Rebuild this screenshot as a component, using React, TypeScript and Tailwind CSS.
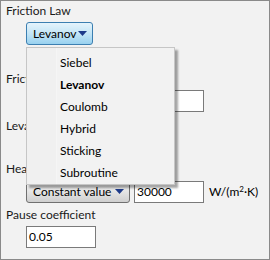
import React from "react";

// Windows-style property panel with the friction law dropdown opened

const laws = ["Siebel", "Levanov", "Coulomb", "Hybrid", "Sticking", "Subroutine"];

function Arrow() {
  return (
    <svg width="9" height="5" viewBox="0 0 9 5" className="shrink-0">
      <path d="M0 0 H9 L4.5 5 Z" fill="#1d3a8a" />
    </svg>
  );
}

function TextBox({ value, w = "w-[70px]" }: { value?: string; w?: string }) {
  return (
    <div className={`${w} h-[22px] border border-[#7a7a7a] bg-white px-[2px] flex items-center text-black`}>
      {value}
    </div>
  );
}

function Label({ text, className = "" }: { text: string; className?: string }) {
  return <div className={`h-[16px] leading-[16px] whitespace-nowrap ${className}`}>{text}</div>;
}

export default function App() {
  return (
    <div
      className="relative w-[270px] h-[260px] bg-[#f2f2f2] border border-[#8a8a8a] text-[12px] text-[#1a1a1a] overflow-hidden"
      style={{ fontFamily: 'Lato, "Open Sans", sans-serif' }}
    >
      <div className="flex flex-col pl-[5px] pt-[2px]">
        <Label text="Friction Law" />

        <div className="ml-[20px] mt-[3px] w-[67px] h-[23px] rounded-[3px] border border-[#3c7fb1] bg-linear-to-b from-[#e5f4fc] via-[#c4e5f6] to-[#98d1ef] flex items-center justify-between pl-[6px] pr-[5px]">
          <span className="text-black whitespace-nowrap">Levanov</span>
          <Arrow />
        </div>

        {/* these labels run on under the open menu */}
        <Label text="Friction coefficient" className="mt-[26px]" />
        <div className="ml-[20px] mt-[3px]">
          <TextBox value="0.12" w="w-[178px]" />
        </div>

        <Label text="Levanov coefficient" className="mt-[6px]" />
        <div className="ml-[20px] mt-[3px]">
          <TextBox value="1.25" />
        </div>

        <Label text="Heat transfer coefficient" className="mt-[2px]" />
        <div className="ml-[20px] mt-[3px] flex items-center gap-[4px]">
          <div className="w-[104px] h-[23px] rounded-[3px] border border-[#707070] bg-linear-to-b from-[#f2f2f2] via-[#e5e5e5] to-[#cfcfcf] flex items-center justify-between pl-[6px] pr-[5px]">
            <span className="text-black whitespace-nowrap">Constant value</span>
            <Arrow />
          </div>
          <TextBox value="30000" />
          <span className="ml-[1px] text-black whitespace-nowrap">
            W/(m<sup className="text-[8px]">2</sup>·K)
          </span>
        </div>

        <Label text="Pause coefficient" className="mt-[4px]" />
        <div className="ml-[20px] mt-[3px]">
          <TextBox value="0.05" />
        </div>
      </div>

      {/* open dropdown menu */}
      <div className="absolute left-[25px] top-[46px] w-[149px] h-[138px] border border-[#c6c6c6] bg-[#f2f2f2] shadow-[3px_3px_2px_rgba(0,0,0,0.35)] flex">
        <div className="w-[30px] bg-[#f0f0f0] border-r border-[#f5f5f5]" />
        <div className="flex flex-col pt-[4px] pl-[3px]">
          {laws.map((l) => (
            <div
              key={l}
              className={`h-[22px] leading-[22px] text-black ${l === "Levanov" ? "font-bold" : ""}`}
            >
              {l}
            </div>
          ))}
        </div>
      </div>
    </div>
  );
}
